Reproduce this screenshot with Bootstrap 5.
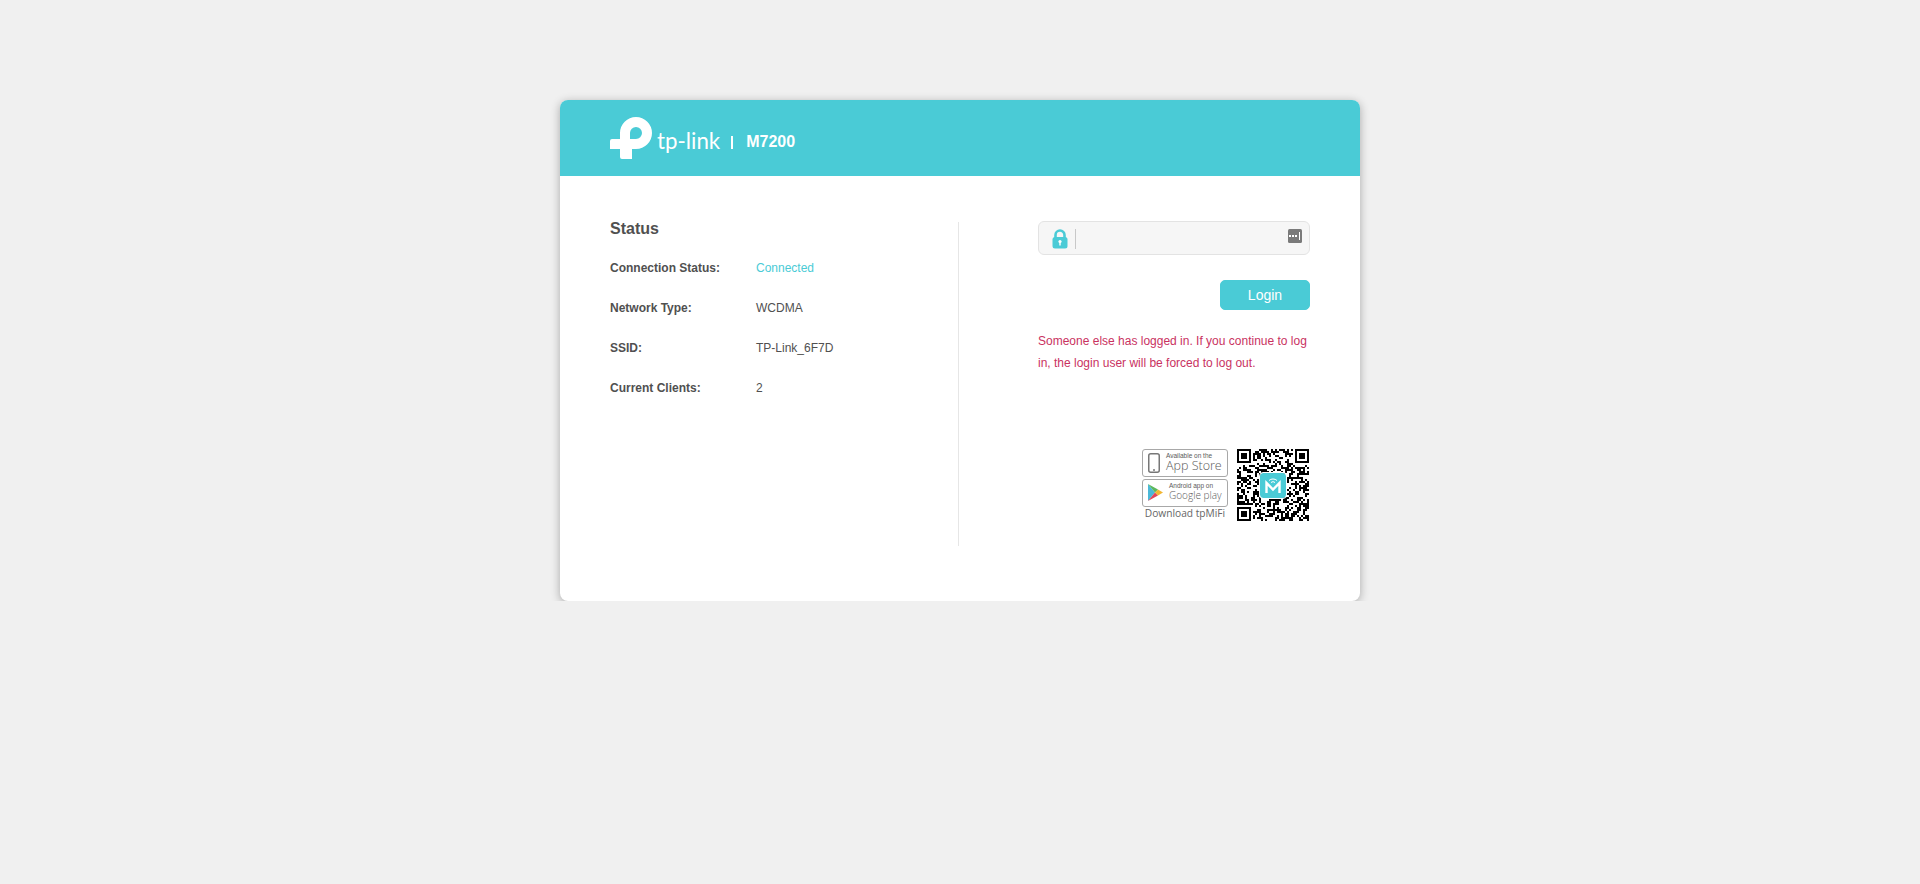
<!DOCTYPE html>
<html lang="en">
<head>
  <meta charset="UTF-8" />
  <title>M7200</title>
  <link href="https://cdn.jsdelivr.net/npm/bootstrap@5.3.3/dist/css/bootstrap.min.css" rel="stylesheet" />
  <style>
    body {
      background-color: #f0f0f0;
      color: #505050;
      font-family: "Liberation Sans", Arial, sans-serif;
      font-size: 12px;
    }
    .login-box {
      width: 800px;
      height: 501px;
      margin: 100px auto 0;
      background: #fff;
      border-radius: 8px;
      box-shadow: 0 2px 10px rgba(0, 0, 0, .3);
      overflow: hidden;
    }
    .login-head {
      height: 76px;
      background: #4acbd6;
      padding: 17px 0 0 50px;
      color: #fff;
    }
    .brand-word {
      font-family: Lato, sans-serif;
      font-weight: 400;
      font-size: 22.3px;
      line-height: 30px;
      margin: 9px 0 0 3px;
    }
    .brand-sep {
      width: 2px;
      height: 13px;
      background: #fff;
      margin: 19px 13px 0 11px;
    }
    .brand-model {
      font-weight: 700;
      font-size: 16px;
      line-height: 20px;
      margin-top: 15px;
    }
    .main-row { padding-top: 46px; }
    .status-side {
      width: 399px;
      height: 324px;
      padding-left: 50px;
      border-right: 1px solid #e6e6e6;
    }
    .status-title {
      font-size: 16px;
      font-weight: 700;
      line-height: 20px;
      margin: -3px 0 9px;
    }
    .status-row {
      height: 40px;
      line-height: 40px;
    }
    .status-label {
      width: 146px;
      font-weight: 700;
    }
    .text-conn { color: #4acbd6; }
    .login-side {
      width: 401px;
      padding-left: 79px;
      margin-top: -1px;
    }
    .pass-box {
      width: 272px;
      height: 34px;
      border: 1px solid #e3e3e3;
      border-radius: 6px;
      background: #f6f6f6;
      padding-left: 13px;
    }
    .pass-lock { margin-top: 7px; }
    .pass-sep {
      width: 1px;
      height: 20px;
      background: #c8c8c8;
      margin: 7px 0 0 7px;
    }
    .pass-eye { margin: 7px 7px 0 auto; }
    .btn-login {
      --bs-btn-bg: #4acbd6;
      --bs-btn-border-color: #4acbd6;
      --bs-btn-hover-bg: #3fbcc7;
      --bs-btn-hover-border-color: #3fbcc7;
      --bs-btn-color: #fff;
      --bs-btn-hover-color: #fff;
      width: 90px;
      height: 30px;
      padding: 0;
      font-size: 14px;
      border-radius: 5px;
      margin: 25px 0 0 182px;
      display: block;
    }
    .login-err {
      color: #c9325f;
      line-height: 22px;
      width: 272px;
      margin: 20px 0 0;
    }
    .app-block {
      width: 272px;
      margin-top: 75px;
    }
    .store-col { width: 86px; margin-right: 9px; }
    .store-badge {
      height: 28px;
      border: 1px solid #a8a8a8;
      border-radius: 3px;
      margin-bottom: 2px;
      color: #5a5a5a;
      padding-left: 5px;
    }
    .store-icon { margin: 3px 6px 0 0; }
    .store-small { font-size: 6.5px; line-height: 7px; margin-top: 2px; white-space: nowrap; }
    .store-big { font-size: 12.5px; line-height: 13px; font-weight: 300; font-family: "Open Sans", sans-serif; white-space: nowrap; }
    .store-google { font-size: 10px; line-height: 12px; font-weight: 300; font-family: "Open Sans", sans-serif; white-space: nowrap; }
    .store-note {
      font-family: "Open Sans", sans-serif;
      font-size: 10.2px;
      line-height: 13px;
      text-align: center;
      color: #666;
      white-space: nowrap;
      margin-top: -2px;
    }
    .qr-wrap { width: 72px; height: 72px; margin-right: 1px; position: relative; }
    .qr-logo {
      position: absolute;
      left: 23px;
      top: 24px;
      width: 26px;
      height: 25px;
      background: #4acbd6;
      border-radius: 3px;
      outline: 1px solid #fff;
    }
  </style>
</head>
<body>
  <div class="login-box">
    <div class="login-head d-flex">
      <svg width="44" height="43" viewBox="0 0 44 43" fill="#fff">
        <path fill-rule="evenodd" d="M10 16A16 16 0 1 1 26 32H22V42H12Q10 42 10 40V32H0V24Q0 22 2 22H10ZM20 22H26A6 6 0 1 0 20 16Z"/>
      </svg>
      <div class="brand-word">tp-link</div>
      <div class="brand-sep"></div>
      <div class="brand-model">M7200</div>
    </div>
    <div class="d-flex main-row">
      <div class="status-side">
        <div class="status-title">Status</div>
        <div class="status-row d-flex"><div class="status-label">Connection Status:</div><div class="text-conn">Connected</div></div>
        <div class="status-row d-flex"><div class="status-label">Network Type:</div><div>WCDMA</div></div>
        <div class="status-row d-flex"><div class="status-label">SSID:</div><div>TP-Link_6F7D</div></div>
        <div class="status-row d-flex"><div class="status-label">Current Clients:</div><div>2</div></div>
      </div>
      <div class="login-side">
        <div class="pass-box d-flex">
          <svg class="pass-lock" width="16" height="20" viewBox="0 0 16 20">
            <path d="M3.500 10V6a4.500 4.500 0 0 1 9 0V10" fill="none" stroke="#4acbd6" stroke-width="2.600"/>
            <rect x="0.500" y="8" width="15" height="11.500" rx="2.500" fill="#4acbd6"/>
            <circle cx="8" cy="12.500" r="1.600" fill="#fff"/>
            <rect x="7.300" y="12.500" width="1.400" height="4" fill="#fff"/>
          </svg>
          <div class="pass-sep"></div>
          <svg class="pass-eye" width="14" height="14" viewBox="0 0 14 14">
            <rect width="14" height="14" rx="1.500" fill="#7a7a7a"/>
            <rect x="1" y="6" width="2" height="2" fill="#fff"/>
            <rect x="4" y="6" width="2" height="2" fill="#fff"/>
            <rect x="7" y="6" width="2" height="2" fill="#fff"/>
            <rect x="11" y="3" width="1" height="8" fill="#fff"/>
          </svg>
        </div>
        <button class="btn btn-login" type="button">Login</button>
        <p class="login-err">Someone else has logged in. If you continue to log in, the login user will be forced to log out.</p>
        <div class="app-block d-flex justify-content-end">
          <div class="store-col">
            <div class="store-badge d-flex">
              <svg class="store-icon" width="12" height="20" viewBox="0 0 12 20"><rect x="0.750" y="0.750" width="10.500" height="18.500" rx="2" fill="none" stroke="#777" stroke-width="1.500"/><circle cx="6" cy="17" r="1" fill="#777"/></svg>
              <div>
                <div class="store-small">Available on the</div>
                <div class="store-big">App Store</div>
              </div>
            </div>
            <div class="store-badge d-flex">
              <svg class="store-icon" width="15" height="19" viewBox="0 0 15 19">
                <path d="M0 1V18L7 9.500z" fill="#4bb8d8"/>
                <path d="M0 1L10 6.500 7 9.500z" fill="#5cb85c"/>
                <path d="M0 18L10 12.500 7 9.500z" fill="#e0455a"/>
                <path d="M10 6.500L15 9.500 10 12.500 7 9.500z" fill="#f2b632"/>
              </svg>
              <div>
                <div class="store-small">Android app on</div>
                <div class="store-google">Google play</div>
              </div>
            </div>
            <div class="store-note">Download tpMiFi</div>
          </div>
          <div class="qr-wrap">
            <svg id="qrCode" width="72" height="72" viewBox="0 0 36 36" shape-rendering="crispEdges"></svg>
            <div class="qr-logo d-flex align-items-center justify-content-center">
              <svg width="20" height="19" viewBox="0 0 20 19">
                <path d="M6 4.500a6 6 0 0 1 8 0M8 6.500a3 3 0 0 1 4 0" fill="none" stroke="#fff" stroke-width="1"/>
                <path d="M3.500 17V7L10 13.500 16.500 7V17" fill="none" stroke="#fff" stroke-width="2.400"/>
              </svg>
            </div>
          </div>
        </div>
      </div>
    </div>
  </div>

  <script>
    // QR pattern, seeded so every render gives the same picture
    const qr = document.getElementById('qrCode');
    const size = 36;
    let seed = 7200;
    function next() {
      seed = (seed * 9301 + 49297) % 233280;
      return seed / 233280;
    }
    function inFinder(x, y) {
      return (x < 8 && y < 8) || (x > size - 9 && y < 8) || (x < 8 && y > size - 9);
    }
    let cells = '';
    for (let y = 0; y < size; y++) {
      for (let x = 0; x < size; x++) {
        if (!inFinder(x, y) && next() > 0.5) cells += `<rect x="${x}" y="${y}" width="1" height="1"/>`;
      }
    }
    [[0, 0], [size - 7, 0], [0, size - 7]].forEach(([x, y]) => {
      cells += `<path fill-rule="evenodd" d="M${x} ${y}h7v7h-7zM${x + 1} ${y + 1}v5h5v-5z"/><rect x="${x + 2}" y="${y + 2}" width="3" height="3"/>`;
    });
    qr.innerHTML = cells;
  </script>
  <script src="https://cdn.jsdelivr.net/npm/bootstrap@5.3.3/dist/js/bootstrap.bundle.min.js"></script>
</body>
</html>
